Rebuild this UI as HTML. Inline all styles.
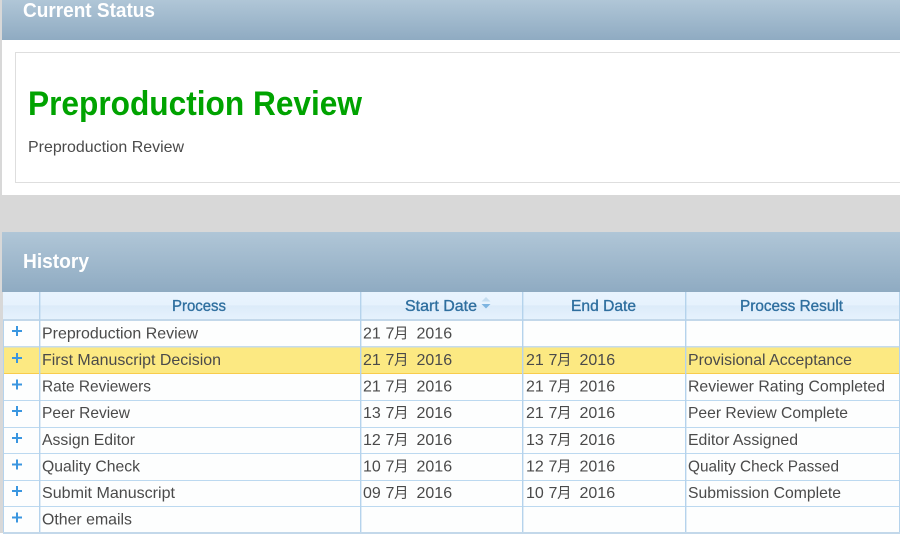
<!DOCTYPE html>
<html><head><meta charset="utf-8"><style>
html,body{margin:0;padding:0;background:#fff;width:900px;height:543px;overflow:hidden}
svg{display:block}
text{font-family:"Liberation Sans","Noto Sans CJK JP",sans-serif}
.c{font-size:16px;fill:#4a4a4a}
.h{font-size:16px;fill:#2f6f9f;stroke:#2f6f9f;stroke-width:.35px}
.t{font-size:20.500px;fill:#fff;font-weight:bold}
.m{font-size:14.500px}
</style></head><body>
<svg width="900" height="543" viewBox="0 0 900 543" xmlns="http://www.w3.org/2000/svg">
<defs>
<linearGradient id="a" x1="0" y1="0" x2="0" y2="1"><stop offset="0" stop-color="#b0c6d7"/><stop offset="1" stop-color="#8fabc2"/></linearGradient>
<linearGradient id="b" x1="0" y1="0" x2="0" y2="1"><stop offset="0" stop-color="#e9f4fe"/><stop offset=".45" stop-color="#e6f2fd"/><stop offset=".5" stop-color="#dcebf9"/><stop offset="1" stop-color="#e6f2fd"/></linearGradient>
</defs>
<rect width="900" height="543" fill="#fff"/>
<rect y="0" width="900" height="232" fill="#d8d8d8"/>
<rect x="0" y="232" width="3" height="301" fill="#d8d8d8"/>
<rect x="2" y="0" width="898" height="195" fill="#fff"/>
<rect x="2" y="0" width="898" height="40" fill="url(#a)"/>
<rect x="15.500" y="52.500" width="890" height="130" fill="#fff" stroke="#dedede"/>
<text class="t" x="23" y="17" textLength="132" lengthAdjust="spacingAndGlyphs">Current Status</text>
<text x="28" y="115" font-size="34" font-weight="bold" fill="#00a300" textLength="334" lengthAdjust="spacingAndGlyphs">Preproduction Review</text>
<text class="c" x="28" y="152" textLength="156" lengthAdjust="spacingAndGlyphs">Preproduction Review</text>

<rect x="2" y="232" width="898" height="60" fill="url(#a)"/>
<text class="t" x="23" y="268" textLength="66" lengthAdjust="spacingAndGlyphs">History</text>

<rect x="3" y="292" width="897" height="241" fill="#fdfefe"/>
<rect x="3" y="292" width="897" height="28" fill="url(#b)"/>
<rect x="3" y="347" width="897" height="27" fill="#fce982"/>
<rect x="3" y="319" width="897" height="2" fill="#c3d8ea"/>
<g fill="#bcd9f0">
<rect x="3" y="400" width="897" height="1"/>
<rect x="3" y="427" width="897" height="1"/>
<rect x="3" y="453" width="897" height="1"/>
<rect x="3" y="480" width="897" height="1"/>
<rect x="3" y="506" width="897" height="1"/>
</g>
<rect x="3" y="346" width="897" height="1.500" fill="#c5dcee"/>
<rect x="3" y="373" width="897" height="1" fill="#f8cc4c"/>
<g fill="#b5d3ec">
<rect x="39" y="292" width="1.400" height="241"/>
<rect x="360" y="292" width="1.400" height="241"/>
<rect x="522" y="292" width="1.400" height="241"/>
<rect x="685" y="292" width="1.400" height="241"/>
<rect x="3" y="320" width="1" height="213"/>
<rect x="899" y="292" width="1" height="241"/>
</g>
<rect x="3" y="532" width="897" height="2" fill="#c3d8ea"/>

<text class="h" x="172" y="311" textLength="54" lengthAdjust="spacingAndGlyphs">Process</text>
<text class="h" x="405" y="311" textLength="72" lengthAdjust="spacingAndGlyphs">Start Date</text>
<path d="M481.500 301.500l4.500-4.500 4.500 4.500z" fill="#c5ddf0"/>
<path d="M481.500 304l4.500 4.500 4.500-4.500z" fill="#7db4e0"/>
<text class="h" x="571" y="311" textLength="65" lengthAdjust="spacingAndGlyphs">End Date</text>
<text class="h" x="740" y="311" textLength="103" lengthAdjust="spacingAndGlyphs">Process Result</text>

<g fill="#3a96e0">
<path d="M12 330h10v2H12zM16 326h2v10h-2z"/>
<path d="M12 357h10v2H12zM16 353h2v10h-2z"/>
<path d="M12 383.500h10v2H12zM16 379.500h2v10h-2z"/>
<path d="M12 410h10v2H12zM16 406h2v10h-2z"/>
<path d="M12 437h10v2H12zM16 433h2v10h-2z"/>
<path d="M12 463.500h10v2H12zM16 459.500h2v10h-2z"/>
<path d="M12 490h10v2H12zM16 486h2v10h-2z"/>
<path d="M12 516.500h10v2H12zM16 512.500h2v10h-2z"/>
</g>

<g class="c">
<text x="42" y="338.500" textLength="156" lengthAdjust="spacingAndGlyphs">Preproduction Review</text>
<text x="42" y="365" textLength="179" lengthAdjust="spacingAndGlyphs">First Manuscript Decision</text>
<text x="42" y="391.500" textLength="109" lengthAdjust="spacingAndGlyphs">Rate Reviewers</text>
<text x="42" y="418" textLength="88" lengthAdjust="spacingAndGlyphs">Peer Review</text>
<text x="42" y="445" textLength="93" lengthAdjust="spacingAndGlyphs">Assign Editor</text>
<text x="42" y="471.500" textLength="98" lengthAdjust="spacingAndGlyphs">Quality Check</text>
<text x="42" y="498" textLength="133" lengthAdjust="spacingAndGlyphs">Submit Manuscript</text>
<text x="42" y="524.500" textLength="90" lengthAdjust="spacingAndGlyphs">Other emails</text>

<text y="338.500"><tspan x="363">21</tspan><tspan x="385.500">7</tspan><tspan x="394" class="m">月</tspan><tspan x="416.500">2016</tspan></text>
<text y="365"><tspan x="363">21</tspan><tspan x="385.500">7</tspan><tspan x="394" class="m">月</tspan><tspan x="416.500">2016</tspan></text>
<text y="391.500"><tspan x="363">21</tspan><tspan x="385.500">7</tspan><tspan x="394" class="m">月</tspan><tspan x="416.500">2016</tspan></text>
<text y="418"><tspan x="363">13</tspan><tspan x="385.500">7</tspan><tspan x="394" class="m">月</tspan><tspan x="416.500">2016</tspan></text>
<text y="445"><tspan x="363">12</tspan><tspan x="385.500">7</tspan><tspan x="394" class="m">月</tspan><tspan x="416.500">2016</tspan></text>
<text y="471.500"><tspan x="363">10</tspan><tspan x="385.500">7</tspan><tspan x="394" class="m">月</tspan><tspan x="416.500">2016</tspan></text>
<text y="498"><tspan x="363">09</tspan><tspan x="385.500">7</tspan><tspan x="394" class="m">月</tspan><tspan x="416.500">2016</tspan></text>

<text y="365"><tspan x="526">21</tspan><tspan x="548.500">7</tspan><tspan x="557" class="m">月</tspan><tspan x="579.500">2016</tspan></text>
<text y="391.500"><tspan x="526">21</tspan><tspan x="548.500">7</tspan><tspan x="557" class="m">月</tspan><tspan x="579.500">2016</tspan></text>
<text y="418"><tspan x="526">21</tspan><tspan x="548.500">7</tspan><tspan x="557" class="m">月</tspan><tspan x="579.500">2016</tspan></text>
<text y="445"><tspan x="526">13</tspan><tspan x="548.500">7</tspan><tspan x="557" class="m">月</tspan><tspan x="579.500">2016</tspan></text>
<text y="471.500"><tspan x="526">12</tspan><tspan x="548.500">7</tspan><tspan x="557" class="m">月</tspan><tspan x="579.500">2016</tspan></text>
<text y="498"><tspan x="526">10</tspan><tspan x="548.500">7</tspan><tspan x="557" class="m">月</tspan><tspan x="579.500">2016</tspan></text>

<text x="688" y="365" textLength="164" lengthAdjust="spacingAndGlyphs">Provisional Acceptance</text>
<text x="688" y="391.500" textLength="197" lengthAdjust="spacingAndGlyphs">Reviewer Rating Completed</text>
<text x="688" y="418" textLength="160" lengthAdjust="spacingAndGlyphs">Peer Review Complete</text>
<text x="688" y="445" textLength="110" lengthAdjust="spacingAndGlyphs">Editor Assigned</text>
<text x="688" y="471.500" textLength="151" lengthAdjust="spacingAndGlyphs">Quality Check Passed</text>
<text x="688" y="498" textLength="153" lengthAdjust="spacingAndGlyphs">Submission Complete</text>
</g>
</svg>
</body></html>
